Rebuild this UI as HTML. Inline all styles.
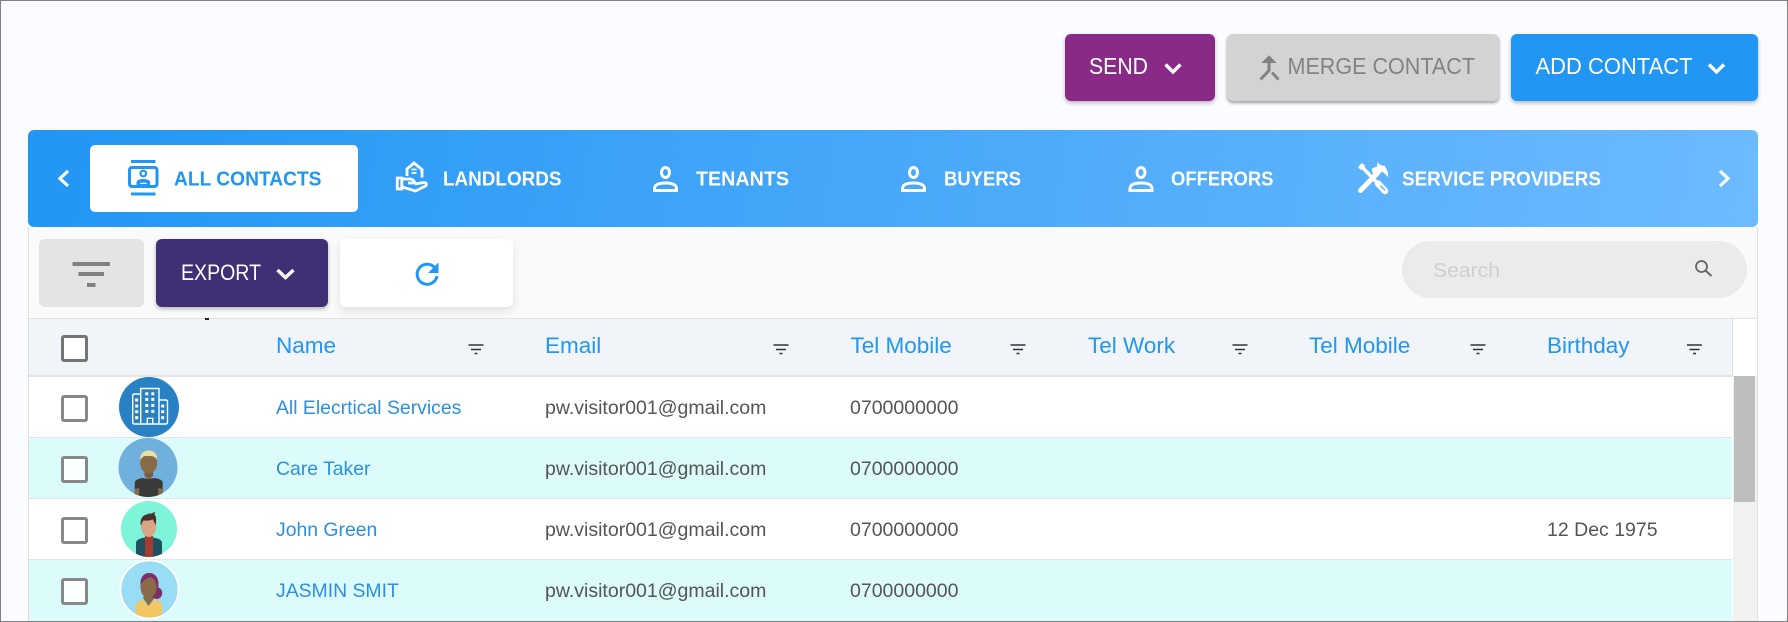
<!DOCTYPE html>
<html lang="en"><head><meta charset="utf-8"><title>Contacts</title>
<style>
html,body{margin:0;padding:0;width:1788px;height:622px;overflow:hidden;background:#fbfcff}
body{position:relative;font-family:"Liberation Sans",sans-serif}
.b{position:absolute;box-sizing:border-box}
svg{position:absolute;left:0;top:0}
text{font-family:"Liberation Sans",sans-serif}
.btn{border-radius:6px;box-shadow:0 2px 4px rgba(0,0,0,.28)}
</style></head>
<body>
<div class="b btn" style="left:1065px;top:34px;width:150px;height:67px;background:#892a87"></div>
<div class="b btn" style="left:1227px;top:34px;width:272px;height:67px;background:#d3d3d3;box-shadow:0 2px 3px rgba(0,0,0,.38)"></div>
<div class="b btn" style="left:1511px;top:34px;width:247px;height:67px;background:#2196f3"></div>

<div class="b" style="left:28px;top:227px;width:1730px;height:395px;background:#fafafa;border-left:1px solid #e0e0e0;border-right:1px solid #e0e0e0"></div>
<div class="b" style="left:28px;top:130px;width:1730px;height:97px;border-radius:6px;background:linear-gradient(100deg,#2196f3,#6dbaff)"></div>
<div class="b" style="left:90px;top:145px;width:268px;height:67px;border-radius:5px;background:#fff"></div>

<div class="b" style="left:39px;top:239px;width:105px;height:68px;border-radius:6px;background:#e4e4e4"></div>
<div class="b btn" style="left:156px;top:239px;width:172px;height:68px;background:#3f3076"></div>
<div class="b" style="left:340px;top:239px;width:173px;height:68px;border-radius:6px;background:#fff;box-shadow:0 4px 10px rgba(0,0,0,.1)"></div>
<div class="b" style="left:1402px;top:241px;width:345px;height:57px;border-radius:29px;background:#ebebeb"></div>

<div class="b" style="left:29px;top:318px;width:1728px;height:304px;background:#fff;border-top:1px solid #e2e2e2"></div>
<div class="b" style="left:29px;top:319px;width:1704px;height:58px;background:#f1f5fa;border-bottom:2px solid #e4e4e4;border-right:1px solid #e0e0e0"></div>
<div class="b" style="left:29px;top:377px;width:1703px;height:61px;background:#fff;border-bottom:1px solid #e4e4e4"></div>
<div class="b" style="left:29px;top:438px;width:1703px;height:61px;background:#dcfbfb;border-bottom:1px solid #e4e4e4"></div>
<div class="b" style="left:29px;top:499px;width:1703px;height:61px;background:#fff;border-bottom:1px solid #e4e4e4"></div>
<div class="b" style="left:29px;top:560px;width:1703px;height:62px;background:#dcfbfb"></div>
<div class="b" style="left:1733px;top:376px;width:24px;height:246px;background:#f1f1f1"></div>
<div class="b" style="left:1734px;top:376px;width:21px;height:126px;background:#bebebe"></div>
<div class="b" style="left:205px;top:318px;width:4px;height:2px;background:#222"></div>

<div class="b" style="left:61px;top:335px;width:27px;height:27px;border:3px solid #757575;border-radius:3px;background:#fff"></div>
<div class="b" style="left:61px;top:395px;width:27px;height:27px;border:3px solid #888;border-radius:3px;background:#fff"></div>
<div class="b" style="left:61px;top:456px;width:27px;height:27px;border:3px solid #888;border-radius:3px;background:#fbffff"></div>
<div class="b" style="left:61px;top:517px;width:27px;height:27px;border:3px solid #888;border-radius:3px;background:#fff"></div>
<div class="b" style="left:61px;top:578px;width:27px;height:27px;border:3px solid #888;border-radius:3px;background:#fbffff"></div>

<svg width="1788" height="622" viewBox="0 0 1788 622" xmlns="http://www.w3.org/2000/svg">
<defs>
<clipPath id="c2"><circle cx="148" cy="467.5" r="29.5"/></clipPath>
<clipPath id="c3"><circle cx="149" cy="529" r="28"/></clipPath>
<clipPath id="c4"><circle cx="149.5" cy="589.5" r="28"/></clipPath>
</defs>

<!-- top buttons -->
<text x="1089" y="74" font-size="23.500" fill="#fff" textLength="59" lengthAdjust="spacingAndGlyphs">SEND</text>
<path d="M1165.500 64.500l7.500 7.500 7.500-7.500" fill="none" stroke="#fff" stroke-width="3.400"/>
<text x="1287.500" y="74" font-size="23.500" fill="#828282" textLength="187.500" lengthAdjust="spacingAndGlyphs">MERGE CONTACT</text>
<path d="M1269 56l-6.500 6.500h13z" fill="#828282" stroke="#828282" stroke-width="1"/>
<path d="M1269 61v9.500l-8.500 9M1272 72.500l6.500 7" fill="none" stroke="#828282" stroke-width="3"/>
<text x="1535.500" y="74" font-size="23.500" fill="#fff" textLength="157" lengthAdjust="spacingAndGlyphs">ADD CONTACT</text>
<path d="M1709 64.500l7.500 7.500 7.500-7.500" fill="none" stroke="#fff" stroke-width="3.400"/>

<!-- tabs -->
<path d="M68 171l-8 7.500 8 7.500" fill="none" stroke="#fff" stroke-width="3.200"/>
<path d="M1720 171l8 7.500-8 7.500" fill="none" stroke="#fff" stroke-width="3.200"/>

<rect x="131" y="160" width="24.500" height="3" fill="#2196f3"/>
<rect x="131" y="192.500" width="24.500" height="3" fill="#2196f3"/>
<rect x="129.500" y="167.500" width="27.500" height="19" rx="2.500" fill="none" stroke="#2196f3" stroke-width="3"/>
<circle cx="143.300" cy="173.500" r="2.800" fill="none" stroke="#2196f3" stroke-width="2.200"/>
<path d="M136.500 185v-2.500c0-2.500 3-3.500 6.800-3.500s6.800 1 6.800 3.500v2.500z" fill="#2196f3"/>
<rect x="140" y="182.800" width="6.600" height="1.200" fill="#fff"/>
<text x="174" y="185.500" font-size="20.500" font-weight="bold" fill="#2196f3" textLength="147.500" lengthAdjust="spacingAndGlyphs">ALL CONTACTS</text>

<!-- landlords -->
<g fill="none" stroke="#fff" stroke-width="2.800">
<path d="M407 176v-7l7-6 8 6.500v8"/>
<path d="M397.300 178v11h4.500v-11z"/>
<path d="M402 179h8c3 0 4 2 5 4h-7M415 184l9-1.500c2.500 0 3 2 1.500 3.500l-10 5-13.500-4"/>
</g>
<path d="M411.500 169.500h5M411.500 173h5" stroke="#fff" stroke-width="1.800"/>
<text x="443" y="185.500" font-size="20.500" font-weight="bold" fill="#fff" textLength="118.500" lengthAdjust="spacingAndGlyphs">LANDLORDS</text>

<!-- person icons -->
<g fill="none" stroke="#fff" stroke-width="3">
<ellipse cx="665.500" cy="172.500" rx="4" ry="5"/>
<path d="M654.500 190.500v-2c0-4 5-5.500 11-5.500s11 1.500 11 5.500v2z"/>
<ellipse cx="913.500" cy="172.500" rx="4" ry="5"/>
<path d="M902.500 190.500v-2c0-4 5-5.500 11-5.500s11 1.500 11 5.500v2z"/>
<ellipse cx="1141" cy="172.500" rx="4" ry="5"/>
<path d="M1130 190.500v-2c0-4 5-5.500 11-5.500s11 1.500 11 5.500v2z"/>
</g>
<text x="696" y="185.500" font-size="20.500" font-weight="bold" fill="#fff" textLength="93" lengthAdjust="spacingAndGlyphs">TENANTS</text>
<text x="944" y="185.500" font-size="20.500" font-weight="bold" fill="#fff" textLength="77" lengthAdjust="spacingAndGlyphs">BUYERS</text>
<text x="1171" y="185.500" font-size="20.500" font-weight="bold" fill="#fff" textLength="102.500" lengthAdjust="spacingAndGlyphs">OFFERORS</text>

<!-- tools -->
<path d="M1360 165l3 3" stroke="#fff" stroke-width="6" fill="none"/>
<path d="M1362 167l14 14.500" stroke="#fff" stroke-width="3.500" fill="none"/>
<path d="M1360.500 190.500l17-17.500" stroke="#fff" stroke-width="5" fill="none" stroke-linecap="round"/>
<path d="M1378 183.500l7 7.500" stroke="#fff" stroke-width="6.500" stroke-linecap="round" fill="none"/>
<path d="M1372 168.500l5-2 .5-4.500 3 3 4.500 1 3 6.500v4.500l-5-5-4 1-2.500 3.500-4.500-4.500z" fill="#fff"/>
<path d="M1380.500 185.500l4.500 5" stroke="#6bb8fe" stroke-width="1.500"/>
<text x="1402" y="185.500" font-size="20.500" font-weight="bold" fill="#fff" textLength="199" lengthAdjust="spacingAndGlyphs">SERVICE PROVIDERS</text>

<!-- toolbar -->
<g fill="#808080"><rect x="72.500" y="262" width="37.500" height="4"/><rect x="78.500" y="272" width="25.500" height="4"/><rect x="87" y="283" width="8.500" height="4"/></g>
<text x="181" y="280" font-size="22" fill="#fff" textLength="80" lengthAdjust="spacingAndGlyphs">EXPORT</text>
<path d="M277.500 270l8 7.500 8-7.500" fill="none" stroke="#fff" stroke-width="3.400"/>
<path d="M434.500 267.500a10 10 0 1 0 2.500 8.500" fill="none" stroke="#2196f3" stroke-width="3"/>
<path d="M438.500 262.500v10.500h-10.500z" fill="#2196f3"/>
<text x="1433" y="277" font-size="20" fill="#cfcfcf" textLength="67" lengthAdjust="spacingAndGlyphs">Search</text>
<circle cx="1701.500" cy="266.500" r="5.500" fill="none" stroke="#666" stroke-width="1.800"/>
<path d="M1705.500 270.500l6 5.500" stroke="#666" stroke-width="2"/>

<!-- header -->
<g font-size="22.500" fill="#2196f3">
<text x="276" y="353">Name</text>
<text x="545" y="353">Email</text>
<text x="850.500" y="353">Tel Mobile</text>
<text x="1088" y="353">Tel Work</text>
<text x="1309" y="353">Tel Mobile</text>
<text x="1547" y="353">Birthday</text>
</g>
<g stroke="#333" stroke-width="1.600" fill="none">
<path d="M468.500 345h15M471 349.500h10M474.500 353.500h3"/>
<path d="M773.500 345h15M776 349.500h10M779.500 353.500h3"/>
<path d="M1010.500 345h15M1013 349.500h10M1016.500 353.500h3"/>
<path d="M1232.500 345h15M1235 349.500h10M1238.500 353.500h3"/>
<path d="M1470.500 345h15M1473 349.500h10M1476.500 353.500h3"/>
<path d="M1687 345h15M1689.500 349.500h10M1693 353.500h3"/>
</g>

<!-- rows -->
<g font-size="19.400" fill="#2c8fdf">
<text x="276" y="414">All Elecrtical Services</text>
<text x="276" y="475">Care Taker</text>
<text x="276" y="536">John Green</text>
<text x="276" y="597">JASMIN SMIT</text>
</g>
<g font-size="19.500" fill="#555">
<text x="545" y="414">pw.visitor001@gmail.com</text><text x="850" y="414">0700000000</text>
<text x="545" y="475">pw.visitor001@gmail.com</text><text x="850" y="475">0700000000</text>
<text x="545" y="536">pw.visitor001@gmail.com</text><text x="850" y="536">0700000000</text><text x="1547" y="536">12 Dec 1975</text>
<text x="545" y="597">pw.visitor001@gmail.com</text><text x="850" y="597">0700000000</text>
</g>

<!-- avatar 1: building -->
<circle cx="149" cy="407" r="30" fill="#2781c2"/>
<g fill="none" stroke="#fff" stroke-width="1.400">
<path d="M140.700 424v-35.500h18.300V424"/>
<path d="M140.700 394h-6.500a1.500 1.500 0 0 0-1.500 1.500V422.500a1.500 1.500 0 0 0 1.500 1.500H166a1.500 1.500 0 0 0 1.500-1.500V401.500a1.500 1.500 0 0 0-1.500-1.500h-7"/>
<path d="M147.300 424v-5.700h5.400v5.700"/>
</g>
<g fill="#fff">
<rect x="145.300" y="392.300" width="3" height="3"/><rect x="151.300" y="392.300" width="3" height="3"/>
<rect x="145.300" y="397.900" width="3" height="3"/><rect x="151.300" y="397.900" width="3" height="3"/>
<rect x="145.300" y="403.900" width="3" height="3"/><rect x="151.300" y="403.900" width="3" height="3"/>
<rect x="145.300" y="409.900" width="3" height="3"/><rect x="151.300" y="409.900" width="3" height="3"/>
<rect x="135.200" y="398.500" width="3" height="3"/><rect x="135.200" y="404.500" width="3" height="3"/><rect x="135.200" y="410.200" width="3" height="3"/><rect x="135.200" y="416.200" width="3" height="3"/>
<rect x="161.200" y="404.500" width="3" height="3"/><rect x="161.200" y="410.200" width="3" height="3"/><rect x="161.200" y="416.200" width="3" height="3"/>
</g>

<!-- avatar 2 -->
<circle cx="148" cy="467.500" r="29.500" fill="#6fb0dc"/>
<g clip-path="url(#c2)">
<path d="M134.700 500v-17c0-3 3-4 8-5l6 1 6-1c5 1 8 2 8 5v17z" fill="#3a3a3a"/>
<path d="M134.700 489l4.500-1v10h-4.500zM158.200 488l4.500 1v9h-4.500z" fill="#8a6b47"/>
<path d="M144.500 470h8.500v6l-4 3.500-4.500-3.500z" fill="#7a5c3c"/>
<ellipse cx="148.700" cy="463" rx="8.500" ry="10.500" fill="#8a6b47"/>
<path d="M140.500 460c-1-6 3-9.500 8.200-9.500s9.200 3.500 8.300 9.500c-1.500-3-4-4-6.500-4-3 .5-5.500-.5-7 .5-1.200.8-2.200 2-3 3.500z" fill="#ecdfa6"/>
</g>

<!-- avatar 3 -->
<circle cx="149" cy="529" r="28" fill="#7ef5db"/>
<g clip-path="url(#c3)">
<path d="M136 560v-17c0-3 3-4.500 9-5.500h8c6 1 9 2.500 9 5.500v17z" fill="#1f5160"/>
<rect x="145" y="536" width="8" height="24" fill="#a53c30"/>
<ellipse cx="148.700" cy="526.500" rx="7.500" ry="10.500" fill="#d8a684"/>
<path d="M141 526c-1.500-6.500 1.500-11 6-11.500l2-1 3 0 3-2-.5 3c2 2 2 6 1 11-1-3-2-5.500-3-6-3 1.500-7 1-9 1-1 1-2 3-2.500 5.500z" fill="#4a3028"/>
</g>

<!-- avatar 4 -->
<circle cx="149.500" cy="589.500" r="29" fill="#98dcf5" stroke="#fff" stroke-width="1.800"/>
<g clip-path="url(#c4)">
<path d="M135.700 620v-14c0-3 2-5 7-6l5.500 6 6-6c5.500 1 8 3 8 6v14z" fill="#f2c660"/>
<path d="M143 598l5.500 8 6-8-2-6h-7z" fill="#8a6b47"/>
<ellipse cx="156.700" cy="593" rx="5.500" ry="6" fill="#7f2f66"/>
<path d="M141 587c-2-9 3-14 8-14 7 0 10 6 9.500 13l-2 4-3-11-7 1c-2 1-3.500 4-3.500 8z" fill="#7f2f66"/>
<ellipse cx="148.500" cy="587.500" rx="8" ry="10.500" fill="#8a6b47"/>
<path d="M140.500 585c-.5-7 3-11.500 8.500-12 6 0 9 5 8.500 11-2-4-4-6.500-6-7-4 .5-8 3-11 8z" fill="#7f2f66"/>
</g>
</svg>

<div class="b" style="left:0;top:0;width:1788px;height:622px;border:1px solid #808080;pointer-events:none"></div>
</body></html>
